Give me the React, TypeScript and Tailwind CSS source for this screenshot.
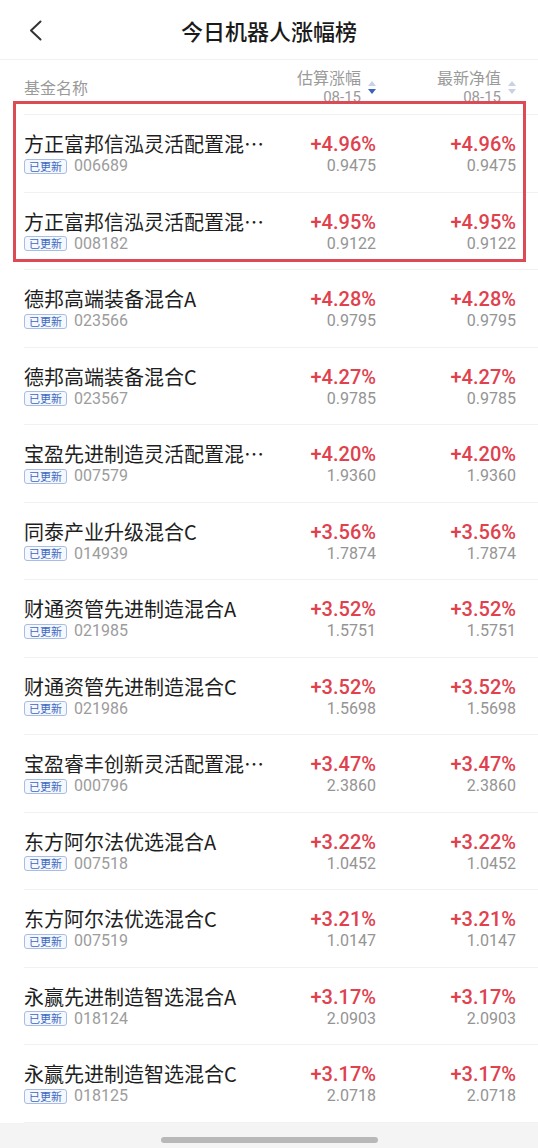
import React from "react";

type Fund = { name: string; code: string; pct: string; nav: string };

const funds: Fund[] = [
  { name: "方正富邦信泓灵活配置混…", code: "006689", pct: "+4.96%", nav: "0.9475" },
  { name: "方正富邦信泓灵活配置混…", code: "008182", pct: "+4.95%", nav: "0.9122" },
  { name: "德邦高端装备混合A", code: "023566", pct: "+4.28%", nav: "0.9795" },
  { name: "德邦高端装备混合C", code: "023567", pct: "+4.27%", nav: "0.9785" },
  { name: "宝盈先进制造灵活配置混…", code: "007579", pct: "+4.20%", nav: "1.9360" },
  { name: "同泰产业升级混合C", code: "014939", pct: "+3.56%", nav: "1.7874" },
  { name: "财通资管先进制造混合A", code: "021985", pct: "+3.52%", nav: "1.5751" },
  { name: "财通资管先进制造混合C", code: "021986", pct: "+3.52%", nav: "1.5698" },
  { name: "宝盈睿丰创新灵活配置混…", code: "000796", pct: "+3.47%", nav: "2.3860" },
  { name: "东方阿尔法优选混合A", code: "007518", pct: "+3.22%", nav: "1.0452" },
  { name: "东方阿尔法优选混合C", code: "007519", pct: "+3.21%", nav: "1.0147" },
  { name: "永赢先进制造智选混合A", code: "018124", pct: "+3.17%", nav: "2.0903" },
  { name: "永赢先进制造智选混合C", code: "018125", pct: "+3.17%", nav: "2.0718" },
];

const cjk = { fontFamily: '"Noto Sans CJK SC", "Noto Sans", sans-serif' };
const num = { fontFamily: 'Roboto, "Noto Sans", sans-serif' };

function SortArrows({ active }: { active: boolean }) {
  return (
    <div className="ml-[7px] flex w-[8px] flex-col items-center gap-[3px]">
      <svg width="8" height="5" viewBox="0 0 8 5">
        <polygon points="4,0 8,5 0,5" fill="#c9d2e3" />
      </svg>
      <svg width="8" height="5" viewBox="0 0 8 5">
        <polygon points="0,0 8,0 4,5" fill={active ? "#3b62bd" : "#c9d2e3"} />
      </svg>
    </div>
  );
}

function HeaderCol({ label, active, width }: { label: string; active: boolean; width: string }) {
  return (
    <div className={`flex ${width} items-center justify-end`}>
      <div className="flex flex-col items-end text-[#9a9a9a]">
        <span className="text-[16px] leading-[20px]" style={cjk}>
          {label}
        </span>
        <span className="text-[15px] leading-[20px]" style={num}>
          08-15
        </span>
      </div>
      <SortArrows active={active} />
    </div>
  );
}

function Row({ f }: { f: Fund }) {
  return (
    <div className="flex h-[77.5px] shrink-0 flex-col">
      <div className="flex flex-1 items-center pl-6 pr-[22px]">
        <div className="flex w-[246px] flex-col pt-[2px]">
          <div className="whitespace-nowrap text-[20px] leading-[24px] text-[#1e1e1e]" style={cjk}>
            {f.name}
          </div>
          <div className="flex h-[20px] items-center">
            <span
              className="rounded-[3px] border border-[#a8bde3] bg-[#f5f8fe] px-[4px] text-[11px] leading-[13px] text-[#3c69c0]"
              style={cjk}
            >
              已更新
            </span>
            <span className="ml-[7px] text-[16px] leading-[20px] text-[#9c9c9c]" style={num}>
              {f.code}
            </span>
          </div>
        </div>
        <div className="flex w-[106px] flex-col items-end pt-[2px]">
          <span className="text-[20px] font-medium leading-[24px] text-[#e0414d]" style={num}>
            {f.pct}
          </span>
          <span className="text-[16px] leading-[20px] text-[#949494]" style={num}>
            {f.nav}
          </span>
        </div>
        <div className="flex w-[140px] flex-col items-end pt-[2px]">
          <span className="text-[20px] font-medium leading-[24px] text-[#e0414d]" style={num}>
            {f.pct}
          </span>
          <span className="text-[16px] leading-[20px] text-[#949494]" style={num}>
            {f.nav}
          </span>
        </div>
      </div>
      <div className="ml-6 border-b border-[#f1f1f1]" />
    </div>
  );
}

export default function App() {
  return (
    <div className="relative flex h-[1148px] w-full flex-col overflow-hidden bg-white">
      {/* top bar */}
      <div className="grid h-[60px] shrink-0 grid-cols-[1fr_auto_1fr] items-center border-b border-[#f1f1f1]">
        <div className="pl-[29px] pt-[1px]">
          <svg width="13" height="21" viewBox="0 0 13 21" fill="none">
            <polyline
              points="11.5,1.5 2,10.5 11.5,19.5"
              stroke="#333333"
              strokeWidth="2"
              strokeLinecap="round"
              strokeLinejoin="round"
            />
          </svg>
        </div>
        <div className="text-[22px] font-medium leading-[28px] text-[#1a1a1a]" style={cjk}>
          今日机器人涨幅榜
        </div>
        <div />
      </div>

      {/* column header */}
      <div className="flex h-[55px] shrink-0 flex-col">
        <div className="flex flex-1 items-center pl-6 pr-[22px]">
          <div className="w-[246px] text-[16px] leading-[20px] text-[#9a9a9a]" style={cjk}>
            基金名称
          </div>
          <HeaderCol label="估算涨幅" active={true} width="w-[106px]" />
          <HeaderCol label="最新净值" active={false} width="w-[140px]" />
        </div>
        <div className="ml-6 border-b border-[#f1f1f1]" />
      </div>

      {funds.map((f) => (
        <Row key={f.code} f={f} />
      ))}

      {/* bottom bar */}
      <div className="flex flex-1 justify-center bg-[#f4f4f4] pt-[14px]">
        <div className="h-[6px] w-[217px] rounded-full bg-[#b8b8b8]" />
      </div>

      {/* red annotation box */}
      <div className="pointer-events-none absolute left-[13px] top-[101px] h-[161px] w-[513px] border-[3px] border-[#dc4a55]" />
    </div>
  );
}
